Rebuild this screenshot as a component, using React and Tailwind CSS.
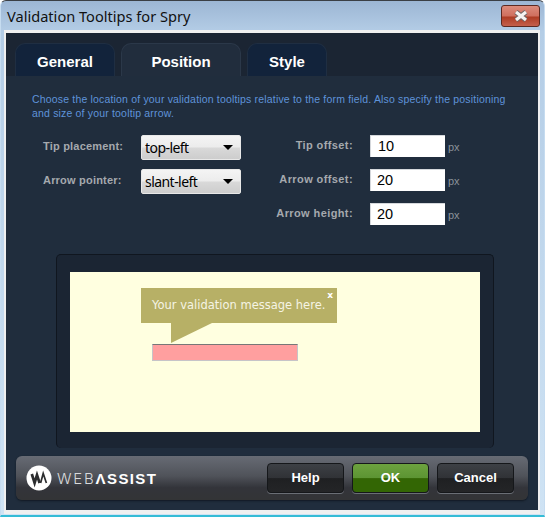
import React from 'react';

const SANS = 'font-["Liberation_Sans",Arial,sans-serif]';

const Tab = ({ label, active, width }) => (
  <div
    className={`${width} h-[33px] pt-[5px] rounded-t-[10px] border border-b-0 flex items-center justify-center text-[15px] font-bold text-white ${
      active ? 'bg-[#212d3d] border-[#2b3849]' : 'bg-[#12233b] border-[#1f2e42]'
    }`}
  >
    {label}
  </div>
);

const Select = ({ value }) => (
  <div className="w-[100px] h-[25px] rounded-[2px] border border-[#e8e8e8] bg-[linear-gradient(#f4f4f4_0%,#ececec_48%,#d9d9d9_52%,#cdcdcd_100%)] flex items-center justify-between pl-[3px] pr-[7px]">
    <span className="font-['Noto_Sans',sans-serif] text-[14px] text-black tracking-[-0.55px]">{value}</span>
    <span className="w-0 h-0 border-x-[5px] border-x-transparent border-t-[5px] border-t-black" />
  </div>
);

const SelectRow = ({ label, value }) => (
  <div className="h-[25px] flex items-center">
    <span className="w-[82px] text-[11px] font-bold text-[#a5a9ae] tracking-[0.2px] -mt-[3px]">{label}</span>
    <span className="ml-[16px]"><Select value={value} /></span>
  </div>
);

const NumberRow = ({ label, value, indent }) => (
  <div className="h-[22px] flex items-center">
    <span className="w-[93px] text-right text-[11px] font-bold text-[#a5a9ae] tracking-[0.4px] -mt-[2px]">{label}</span>
    <div className={`ml-[17px] w-[75px] h-[22px] bg-white border-t border-l border-[#d5d8dc] text-[14.5px] leading-[20px] text-black ${indent}`}>
      {value}
    </div>
    <span className="ml-[3px] pt-[3px] text-[11px] text-[#8b919a]">px</span>
  </div>
);

const FooterButton = ({ label, ok }) => (
  <div
    className={`w-[77px] h-[30px] rounded-[4px] border border-[#15171a] flex items-center justify-center text-[13px] font-bold text-white shadow-[0_1px_0_#6a6e75] ${
      ok
        ? 'bg-[linear-gradient(#6da23f_0%,#5c9433_50%,#336604_52%,#336604_100%)]'
        : 'bg-[linear-gradient(#3d4045_0%,#303236_50%,#1f2022_52%,#242527_100%)]'
    }`}
  >
    {label}
  </div>
);

const Logo = () => (
  <div className="flex items-center">
    <svg width="26" height="26" viewBox="0 0 26 26" fill="none">
      <circle cx="13" cy="13" r="12.5" fill="#fff" />
      <path d="M5.8 9 L8.6 18 L11 10 L13.6 18" stroke="#2b2c2e" strokeWidth="2.7" />
      <path d="M14.6 18 L17.2 8.5 L20.4 18" stroke="#2b2c2e" strokeWidth="1.7" />
    </svg>
    <span className="ml-[5px] flex items-center text-[15px] leading-none">
      <span className="font-['Inter',sans-serif] font-light tracking-[1.8px] text-[#d8d9db]">WEB</span>
      <span className="font-['Liberation_Sans',sans-serif] font-bold tracking-[1.4px] text-white">ΛSSIST</span>
    </span>
  </div>
);

export default function App() {
  return (
    <div className={`${SANS} relative w-[545px] h-[517px] overflow-hidden rounded-t-[6px] border-t border-x border-b-2 border-x-[#c6dcf0] border-t-[#3a3f45] border-b-[#35bcd6] bg-[linear-gradient(#9cb6d4_0%,#b4cde6_6%,#cfe3f4_100%)] flex flex-col`}>
      <div className="h-[29px] shrink-0 flex items-center justify-between pl-[6px] pr-[4px]">
        <span className="font-['Noto_Sans',sans-serif] text-[14.6px] text-[#111] pt-[2px]">Validation Tooltips for Spry</span>
        <div className="w-[39px] h-[22px] rounded-[3px] border border-[#5c2a22] bg-[linear-gradient(#dc8c7c_0%,#cf6f5e_50%,#ae3c24_55%,#c4604c_100%)] flex items-center justify-center">
          <svg width="16" height="12" viewBox="0 0 16 12" fill="none">
            <path d="M3 2 L13 10 M13 2 L3 10" stroke="#6b6464" strokeWidth="5" />
            <path d="M3 2 L13 10 M13 2 L3 10" stroke="#f6f3f1" strokeWidth="3.2" />
          </svg>
        </div>
      </div>

      <div className="ml-[3px] mr-[4px] mb-[1px] border-x-2 border-t-[3px] border-b-[4px] border-[#f0f0f0] flex-1 flex flex-col min-h-0">
        <div className="h-[43px] shrink-0 bg-[#1b2533] flex items-end gap-[6px] pl-[9px]">
          <Tab label="General" width="w-[100px]" />
          <Tab label="Position" width="w-[120px]" active />
          <Tab label="Style" width="w-[80px]" />
        </div>

        <div className="flex-1 bg-[#202d3d] flex flex-col min-h-0">
          <p className="pl-[26px] pr-[22px] pt-[16px] text-[10.5px] leading-[14px] tracking-[0.175px] text-[#5f93da]">
            Choose the location of your validation tooltips relative to the form field. Also specify the positioning and size of your tooltip arrow.
          </p>

          <div className="mt-[15px] flex items-start">
            <div className="flex flex-col gap-[9px] ml-[37px]">
              <SelectRow label="Tip placement:" value="top-left" />
              <SelectRow label="Arrow pointer:" value="slant-left" />
            </div>
            <div className="ml-[19px] flex flex-col gap-[12px]">
              <NumberRow label="Tip offset:" value="10" indent="pl-[7px]" />
              <NumberRow label="Arrow offset:" value="20" indent="pl-[6px]" />
              <NumberRow label="Arrow height:" value="20" indent="pl-[6px]" />
            </div>
          </div>

          <div className="mt-[29px] ml-[50px] mr-[44px] h-[194px] rounded-[5px] border-t border-x border-[#10161f] bg-[#1b2533] px-[13px] pt-[17px]">
            <div className="relative h-[160px] bg-[#ffffe0]">
              <div className="absolute left-[71px] top-[16px]">
                <div className="relative w-[196px] h-[35px] pt-[1px] bg-[#b7b066] flex items-center pl-[11px] font-['DejaVu_Sans',sans-serif] text-[11.5px] text-[#f5f4e4] whitespace-nowrap">
                  Your validation message here.
                  <span className="absolute right-[4px] top-[1px] text-[9px] leading-[12px] font-bold text-white">x</span>
                </div>
                <svg className="block ml-[30px]" width="41" height="20" viewBox="0 0 41 20">
                  <path d="M0 0 H41 L0 20 Z" fill="#b7b066" />
                </svg>
              </div>
              <div className="absolute left-[82px] top-[72px] w-[146px] h-[17px] bg-[#ff9f9f] border border-[#c6c4c8] border-t-[#777]" />
            </div>
          </div>

          <div className="mx-[10px] mt-[8px] h-[44px] shrink-0 rounded-[6px] bg-[linear-gradient(#676b74_0%,#50535a_45%,#33343a_72%,#333436_100%)] shadow-[0_1px_2px_#111822] flex items-center justify-between pl-[10px] pr-[14px]">
            <Logo />
            <div className="flex gap-[8px]">
              <FooterButton label="Help" />
              <FooterButton label="OK" ok />
              <FooterButton label="Cancel" />
            </div>
          </div>
        </div>
      </div>
    </div>
  );
}
